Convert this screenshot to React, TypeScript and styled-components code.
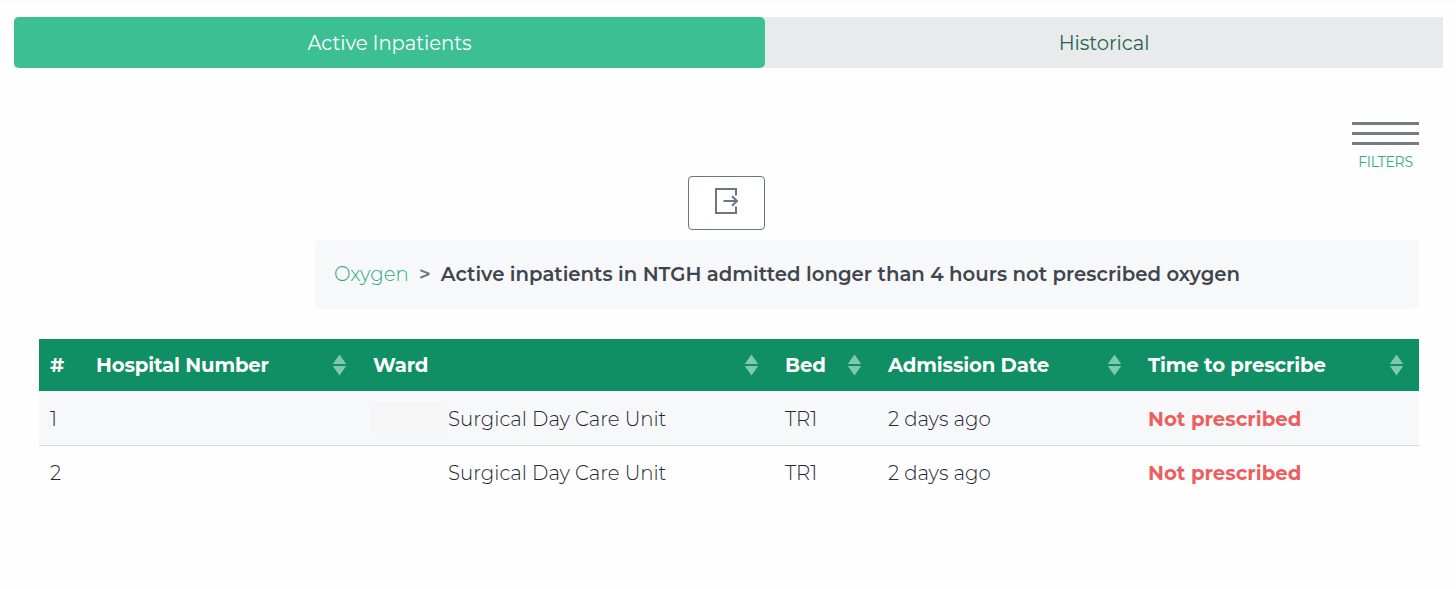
import { useState } from 'react'
import styled, { createGlobalStyle } from 'styled-components'

const GlobalStyle = createGlobalStyle`
  * {
    box-sizing: border-box;
  }
  body {
    margin: 0;
    background: #fefefe;
    font-family: Montserrat, Inter, "Open Sans", sans-serif;
    font-size: 19.75px;
    font-weight: 300;
    color: #23262e;
  }
`

const Page = styled.div`
  width: 100%;
  min-height: 589px;
  padding: 15px 13px 0 14px;
  border-top: 2px solid #fbfbfb;
`

const Tabs = styled.div`
  display: flex;
  height: 51px;
  background: #e9eaec;
`

const Tab = styled.button<{ $active: boolean; $grow: number }>`
  flex: ${({ $grow }) => $grow} 1 0;
  padding: 0;
  border: none;
  border-radius: 5px;
  background: ${({ $active }) => ($active ? '#3bbf93' : 'transparent')};
  color: ${({ $active }) => ($active ? '#fff' : '#22694f')};
  font: inherit;
  font-weight: 400;
  font-size: 19.6px;
  letter-spacing: -0.08px;
  cursor: pointer;
`

const Content = styled.div`
  padding: 54px 24px 0 25px;
`

const FilterRow = styled.div`
  display: flex;
  justify-content: flex-end;
`

const FilterButton = styled.button`
  display: flex;
  flex-direction: column;
  align-items: center;
  gap: 7px;
  width: 67px;
  height: 54px;
  padding: 0;
  border: none;
  background: none;
  font: inherit;
  font-size: 14px;
  font-weight: 400;
  letter-spacing: -0.25px;
  line-height: 20px;
  color: #36a983;
  cursor: pointer;
`

const FilterLine = styled.span`
  width: 100%;
  height: 3px;
  background: #787b83;
`

const ExportRow = styled.div`
  display: flex;
  justify-content: center;
  padding-right: 5px;
`

const ExportButton = styled.button`
  display: flex;
  align-items: center;
  justify-content: center;
  width: 77px;
  height: 54px;
  padding: 0 0 4px;
  border: 1.5px solid #6b7583;
  border-radius: 4px;
  background: #fff;
  cursor: pointer;
`

const Breadcrumb = styled.div`
  display: flex;
  align-items: center;
  height: 69px;
  margin: 10px 0 30px 276px;
  padding: 0 0 1px 19px;
  border-radius: 5px;
  background: #f7f8fa;
  white-space: nowrap;
`

const Crumb = styled.a`
  color: #2fac80;
  text-decoration: none;
`

const Divider = styled.span`
  width: 32px;
  text-align: center;
  font-weight: 600;
  color: #6f7883;
`

const CrumbTitle = styled.span`
  font-weight: 600;
  font-size: 19.7px;
  color: #40454d;
`

const Table = styled.table`
  width: 100%;
  table-layout: fixed;
  border-collapse: collapse;
  white-space: nowrap;
`

const HeadCell = styled.th<{ $width?: number }>`
  width: ${({ $width }) => ($width ? `${$width}px` : 'auto')};
  height: 52px;
  padding: 0 15px 0 11px;
  background: #0f8f63;
  color: #fff;
  font-size: 19.7px;
  font-weight: 700;
  letter-spacing: -0.15px;
  text-align: left;
`

const HeadInner = styled.div`
  display: flex;
  align-items: center;
  justify-content: space-between;
`

const Row = styled.tr`
  height: 54px;
  &:nth-child(odd) {
    background: #f7f8fa;
  }
  & + & {
    border-top: 1px solid #d5d9dd;
  }
`

const Cell = styled.td`
  padding: 2px 11px 0;
`

const WardCell = styled.div`
  display: flex;
  align-items: center;
  margin-left: -2px;
`

const Redacted = styled.span<{ $visible: boolean }>`
  width: 76px;
  height: 31px;
  margin-right: 1px;
  background: ${({ $visible }) => ($visible ? '#f6f6f6' : 'transparent')};
`

const Alert = styled.strong`
  font-size: 19.7px;
  font-weight: 700;
  color: #ed5e5e;
`

const SortIcon = () => (
  <svg width="15" height="22" viewBox="0 0 15 22" fill="#7fcaaa">
    <path d="M7.5 0.5L14.2 10H0.8Z" />
    <path d="M7.5 21.5L14.2 12H0.8Z" />
  </svg>
)

const ExportIcon = () => (
  <svg width="25" height="28" viewBox="0 0 25 28" fill="none" stroke="#6b7583" strokeWidth="2">
    <path d="M22 8.5V2H2V26H22V19.5" />
    <path d="M9.5 14H23M18 9.2L23 14L18 18.8" />
  </svg>
)

const columns = [
  { title: '#', width: 46, sortable: false },
  { title: 'Hospital Number', width: 277, sortable: true },
  { title: 'Ward', width: 412, sortable: true },
  { title: 'Bed', width: 103, sortable: true },
  { title: 'Admission Date', width: 260, sortable: true },
  { title: 'Time to prescribe', sortable: true },
]

const rows = [
  { id: 1, ward: 'Surgical Day Care Unit', bed: 'TR1', admitted: '2 days ago', status: 'Not prescribed' },
  { id: 2, ward: 'Surgical Day Care Unit', bed: 'TR1', admitted: '2 days ago', status: 'Not prescribed' },
]

const App = () => {
  const [tab, setTab] = useState('active')

  return (
    <>
      <GlobalStyle />
      <Page>
        <Tabs>
          <Tab $active={tab === 'active'} $grow={751} onClick={() => setTab('active')}>
            Active Inpatients
          </Tab>
          <Tab $active={tab === 'historical'} $grow={678} onClick={() => setTab('historical')}>
            Historical
          </Tab>
        </Tabs>
        <Content>
          <FilterRow>
            <FilterButton>
              <FilterLine />
              <FilterLine />
              <FilterLine />
              <span>FILTERS</span>
            </FilterButton>
          </FilterRow>
          <ExportRow>
            <ExportButton aria-label="Export">
              <ExportIcon />
            </ExportButton>
          </ExportRow>
          <Breadcrumb>
            <Crumb href="#">Oxygen</Crumb>
            <Divider>&gt;</Divider>
            <CrumbTitle>Active inpatients in NTGH admitted longer than 4 hours not prescribed oxygen</CrumbTitle>
          </Breadcrumb>
          <Table>
            <thead>
              <tr>
                {columns.map((column) => (
                  <HeadCell key={column.title} $width={column.width}>
                    <HeadInner>
                      {column.title}
                      {column.sortable ? <SortIcon /> : null}
                    </HeadInner>
                  </HeadCell>
                ))}
              </tr>
            </thead>
            <tbody>
              {rows.map((row) => (
                <Row key={row.id}>
                  <Cell>{row.id}</Cell>
                  <Cell />
                  <Cell>
                    <WardCell>
                      <Redacted $visible={row.id === 1} />
                      {row.ward}
                    </WardCell>
                  </Cell>
                  <Cell>{row.bed}</Cell>
                  <Cell>{row.admitted}</Cell>
                  <Cell><Alert>{row.status}</Alert></Cell>
                </Row>
              ))}
            </tbody>
          </Table>
        </Content>
      </Page>
    </>
  )
}

export default App
